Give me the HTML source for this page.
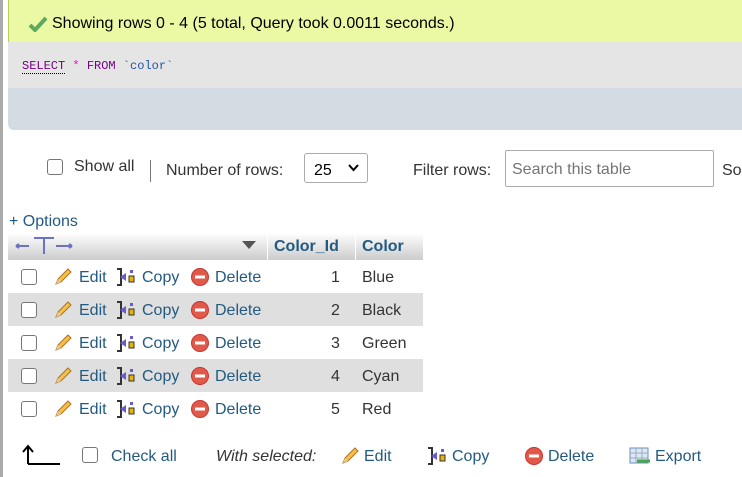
<!DOCTYPE html>
<html><head><meta charset="utf-8"><style>
body{margin:0;width:742px;height:477px;overflow:hidden;background:#fff;font-family:"Liberation Sans",Arial,sans-serif;font-size:16px;color:#333;position:relative}
.a{position:absolute;white-space:nowrap}
.lnk{color:#235a81}
.cb{position:absolute;width:14px;height:14px;border:1px solid #767676;border-radius:3px;background:#fff}
</style></head><body>
<div class="a" style="left:0;top:0;width:3px;height:477px;background:#aaa"></div>
<div class="a" style="left:8px;top:0;width:734px;height:42px;background:#ebf8a4;border-left:1px solid #b9cc5a"></div>
<svg class="a" style="left:28px;top:16px" width="20" height="16" viewBox="0 0 20 16"><path d="M2 9 L7 14 L18 2" stroke="#5fa85f" stroke-width="4" fill="none"/></svg>
<div class="a" style="left:52px;top:15px;color:#000">Showing rows 0 - 4 (5 total, Query took 0.0011 seconds.)</div>
<div class="a" style="left:8px;top:42px;width:734px;height:46px;background:#e5e5e5"></div>
<div class="a" style="left:22px;top:59px;font-family:'Liberation Mono',monospace;font-size:12px"><span style="color:#708;border-bottom:1px dotted #000">SELECT</span> <span style="color:#f0f">*</span> <span style="color:#708">FROM</span> <span style="color:#25a">`color`</span></div>
<div class="a" style="left:8px;top:88px;width:734px;height:42px;background:#d3dce3;border-radius:0 0 0 6px"></div>
<div class="cb" style="left:47px;top:159px"></div>
<div class="a" style="left:74px;top:158px">Show all</div>
<div class="a" style="left:150px;top:160px;width:1px;height:22px;background:#777"></div>
<div class="a" style="left:166px;top:162px">Number of rows:</div>
<div class="a" style="left:304px;top:153px;width:64px;height:30px;border:1px solid #aaa;border-radius:3px;box-sizing:border-box"></div>
<div class="a" style="left:314px;top:162px;color:#000">25</div>
<svg class="a" style="left:348px;top:164px" width="11" height="8"><path d="M1 1 L5.5 6 L10 1" stroke="#000" stroke-width="2" fill="none"/></svg>
<div class="a" style="left:413px;top:162px">Filter rows:</div>
<div class="a" style="left:505px;top:150px;width:209px;height:37px;border:1px solid #aaa;border-radius:2px;box-sizing:border-box"></div>
<div class="a" style="left:512px;top:161px;color:#757575">Search this table</div>
<div class="a" style="left:722px;top:162px">So</div>
<div class="a lnk" style="left:9px;top:213px">+ Options</div>
<div class="a" style="left:8px;top:233px;width:415px;height:27px;background:linear-gradient(#fff,#ccc)"></div>
<div class="a" style="left:267px;top:233px;width:1px;height:27px;background:#fff"></div>
<div class="a" style="left:355px;top:233px;width:1px;height:27px;background:#fff"></div>
<svg class="a" style="left:14px;top:236px" width="62" height="20"><path d="M2 10 H15 M2 10 L5 8 M2 10 L5 12 M30 2 V18 M20 2 H40 M42 10 H58 M58 10 L55 8 M58 10 L55 12" stroke="#6a72c6" stroke-width="2" fill="none"/></svg>
<svg class="a" style="left:242px;top:241px" width="14" height="8"><path d="M0 0 H14 L7 8Z" fill="#555"/></svg>
<div class="a lnk" style="left:274px;top:238px;font-weight:bold">Color_Id</div>
<div class="a lnk" style="left:362px;top:238px;font-weight:bold">Color</div>
<div class="a" style="left:8px;top:293px;width:415px;height:33px;background:#dfdfdf"></div>
<div class="a" style="left:8px;top:359px;width:415px;height:33px;background:#dfdfdf"></div>
<div id="rows"></div>
<script>
var d=[["1","Blue"],["2","Black"],["3","Green"],["4","Cyan"],["5","Red"]],h="";
var pen='<svg width="20" height="20" viewBox="0 0 20 20"><path d="M3 17 L5 12 L15 2 L18 5 L8 15Z" fill="#f5c04a" stroke="#b07020"/><path d="M3 17 L5 12 L8 15Z" fill="#e8c89a"/></svg>';
var cp='<svg width="20" height="20" viewBox="0 0 20 20"><path d="M1 2h4v16H1" stroke="#333" fill="none" stroke-width="2"/><path d="M4 10 L10 6 V14Z" fill="#6a5acd"/><rect x="13" y="9" width="5" height="6" fill="#e8b400" stroke="#333"/><rect x="14" y="3" width="3" height="3" fill="#6a5acd"/></svg>';
var del='<svg width="20" height="20" viewBox="0 0 20 20"><circle cx="10" cy="10" r="8.5" fill="#e05a4a" stroke="#c33"/><rect x="5" y="8.5" width="10" height="3" fill="#fff"/></svg>';
d.forEach(function(r,i){var y=260+i*33;
h+='<div class="cb" style="left:21px;top:'+(y+9)+'px"></div>';
h+='<div class="a" style="left:53px;top:'+(y+7)+'px">'+pen+'</div><div class="a lnk" style="left:79px;top:'+(y+9)+'px">Edit</div>';
h+='<div class="a" style="left:116px;top:'+(y+7)+'px">'+cp+'</div><div class="a lnk" style="left:142px;top:'+(y+9)+'px">Copy</div>';
h+='<div class="a" style="left:190px;top:'+(y+7)+'px">'+del+'</div><div class="a lnk" style="left:215px;top:'+(y+9)+'px">Delete</div>';
h+='<div class="a" style="left:331px;top:'+(y+9)+'px">'+r[0]+'</div><div class="a" style="left:362px;top:'+(y+9)+'px">'+r[1]+'</div>';});
h+='<svg class="a" style="left:22px;top:444px" width="40" height="22"><path d="M6 20 V3 M1 8 L6 2 L11 8 M6 20 H38" stroke="#000" stroke-width="2" fill="none"/></svg>';
h+='<div class="cb" style="left:82px;top:447px"></div><div class="a lnk" style="left:111px;top:448px">Check all</div>';
h+='<div class="a" style="left:216px;top:448px;font-style:italic">With selected:</div>';
h+='<div class="a" style="left:340px;top:446px">'+pen+'</div><div class="a lnk" style="left:364px;top:448px">Edit</div>';
h+='<div class="a" style="left:427px;top:446px">'+cp+'</div><div class="a lnk" style="left:452px;top:448px">Copy</div>';
h+='<div class="a" style="left:524px;top:446px">'+del+'</div><div class="a lnk" style="left:548px;top:448px">Delete</div>';
h+='<div class="a" style="left:629px;top:446px"><svg width="22" height="20"><rect x="1" y="2" width="18" height="15" fill="#dde8f5" stroke="#6a8fbf"/><path d="M1 7H19M1 12H19M7 2V17M13 2V17" stroke="#9ab"/><path d="M8 15H21" stroke="#4a4" stroke-width="3"/></svg></div><div class="a lnk" style="left:655px;top:448px">Export</div>';
document.getElementById("rows").innerHTML=h;
</script>
</body></html>
